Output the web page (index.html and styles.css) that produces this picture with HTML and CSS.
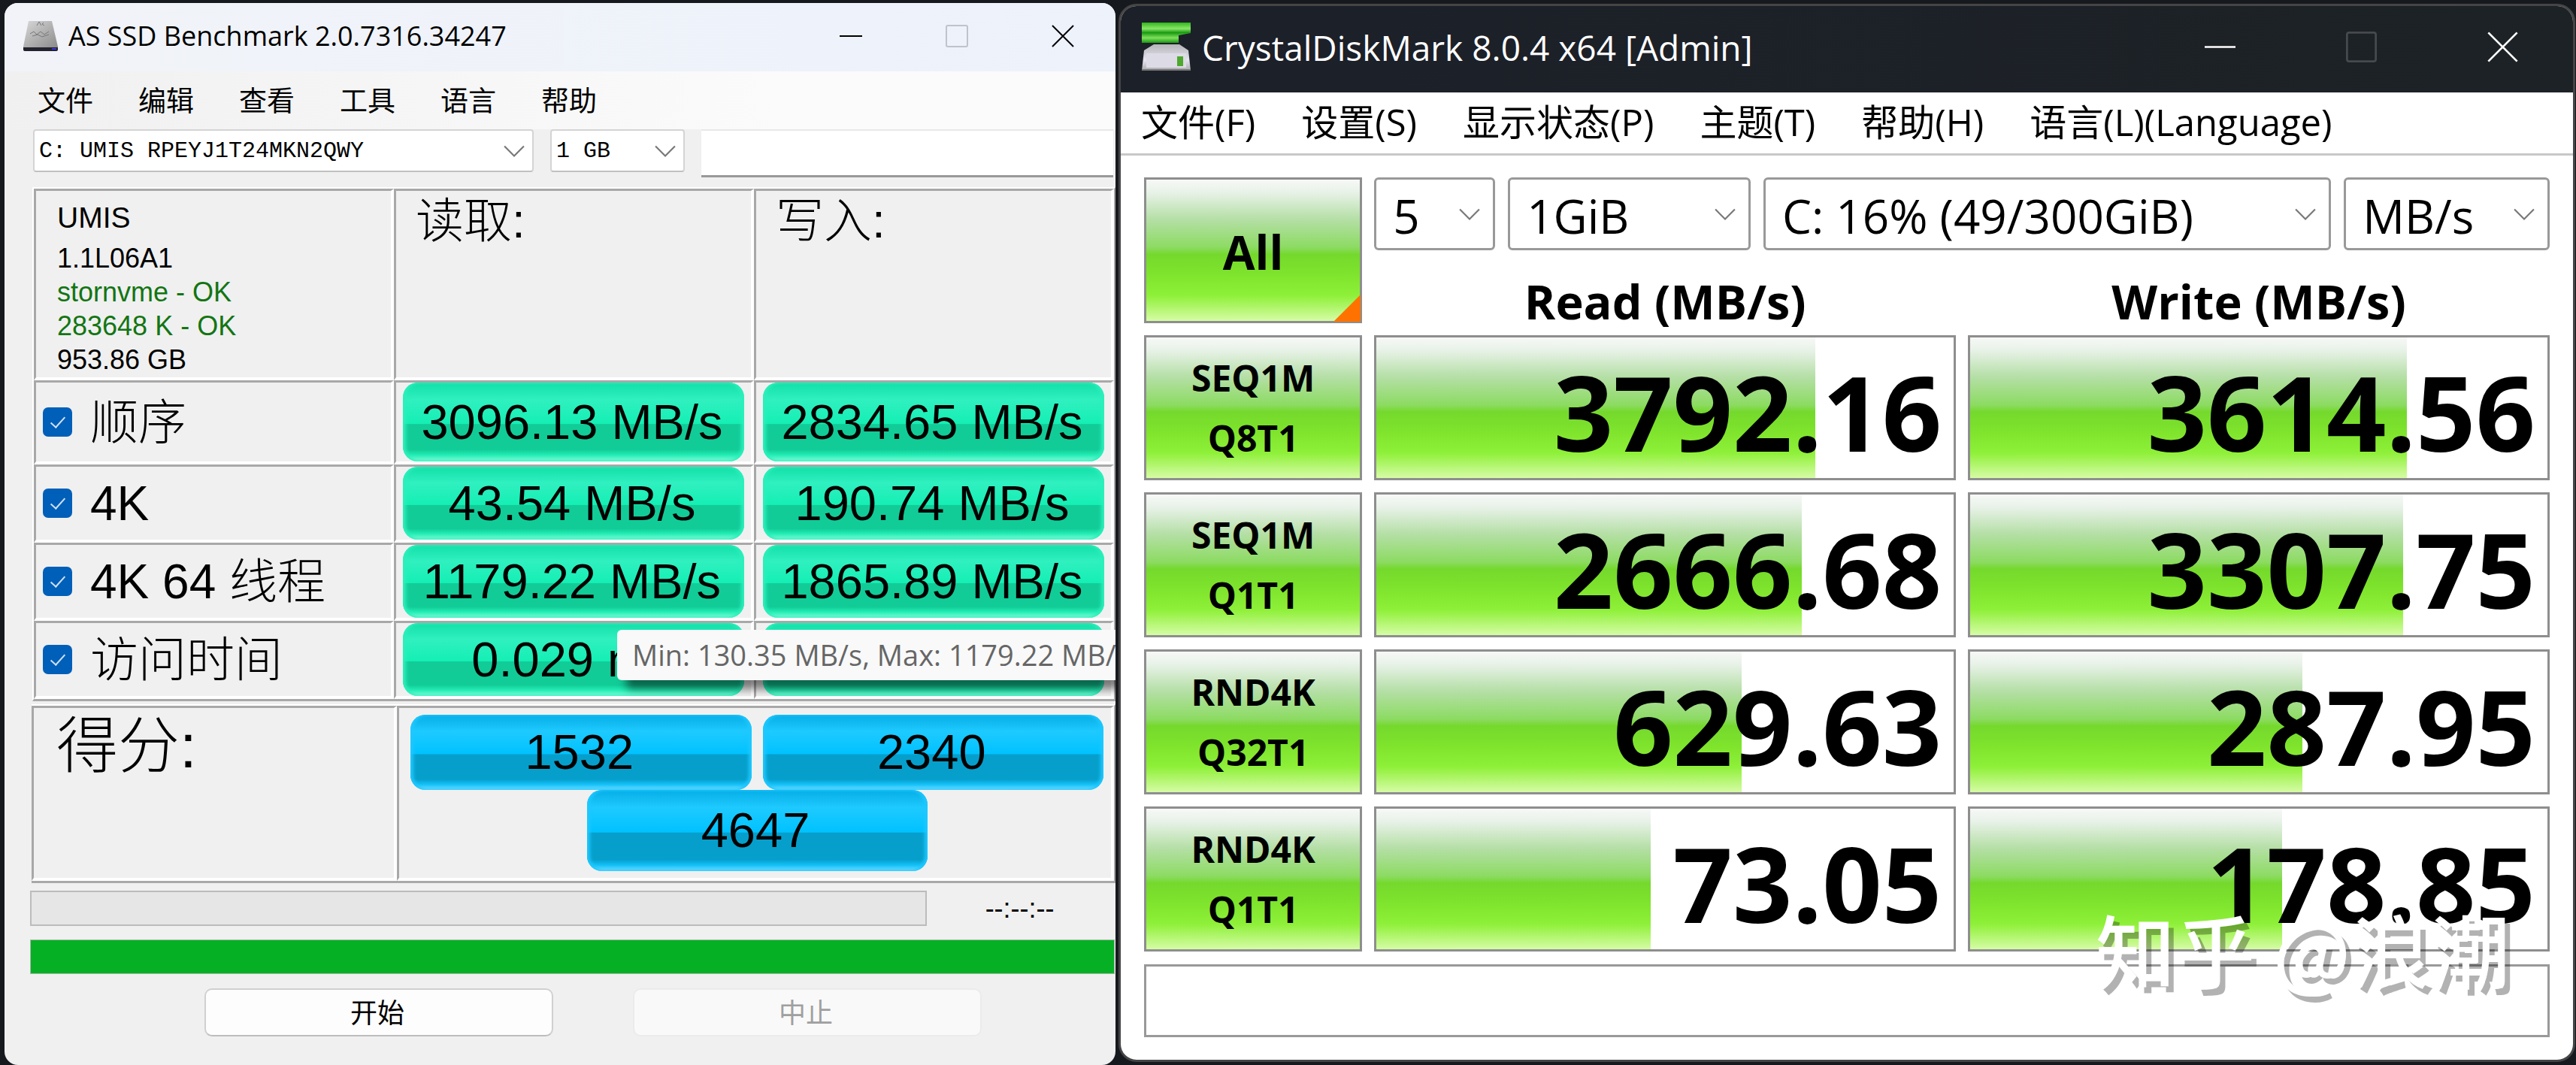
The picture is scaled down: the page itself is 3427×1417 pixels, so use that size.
FILE: index.html
```
<!DOCTYPE html>
<html lang="zh-CN">
<head>
    <meta charset="UTF-8">
    <meta name="viewport" content="width=device-width, initial-scale=1.0">
    <title>SSD Benchmarks</title>
    <link rel="stylesheet" href="styles.css">
</head>
<body>
    <main class="desktop">
        <section class="window as-window">
            <header class="titlebar">
                <svg class="app-icon" viewBox="0 0 46 40" preserveAspectRatio="none">
                    <defs>
                        <linearGradient id="drive" x1="0" y1="0" x2="1" y2="1">
                            <stop offset="0" stop-color="#d8d8d8"/>
                            <stop offset="1" stop-color="#8a8a8a"/>
                        </linearGradient>
                    </defs>
                    <path d="M7 0H38L46 34V36H0V34Z" fill="url(#drive)"/>
                    <path d="M18 6l3-5 3 5M27 2l-2 2 3 2M9 17l5-3 4 4 5-4 5 4 6-4M12 20l7-2 6 3 9-3" fill="none" stroke="#777" stroke-width="1"/>
                    <path d="M0 35H46V38Q46 40 43 40H3Q0 40 0 38Z" fill="#23232f"/>
                    <path d="M38 36h6v2h-6z" fill="#3a34d8"/>
                </svg>
                <h1>AS SSD Benchmark 2.0.7316.34247</h1>
                <button class="win-button" aria-label="Minimize"><svg viewBox="0 0 30 30"><path d="M0 15H30"/></svg></button>
                <button class="win-button" aria-label="Maximize" disabled><svg viewBox="0 0 30 30"><rect x="1" y="1" width="28" height="28" rx="2"/></svg></button>
                <button class="win-button" aria-label="Close"><svg viewBox="0 0 30 30"><path d="M1 1L29 29M29 1L1 29"/></svg></button>
            </header>

            <nav class="menubar">
                <a href="#">文件</a>
                <a href="#">编辑</a>
                <a href="#">查看</a>
                <a href="#">工具</a>
                <a href="#">语言</a>
                <a href="#">帮助</a>
            </nav>

            <div class="as-toolbar">
                <div class="select as-drive">
                    <select aria-label="Drive"><option>C: UMIS RPEYJ1T24MKN2QWY</option></select>
                    <svg viewBox="0 0 26 14"><path d="M1 1L13 13L25 1"/></svg>
                </div>
                <div class="select as-size">
                    <select aria-label="Test size"><option>1 GB</option></select>
                    <svg viewBox="0 0 26 14"><path d="M1 1L13 13L25 1"/></svg>
                </div>
                <input class="as-note" type="text" aria-label="Note">
            </div>

            <div class="as-results">
                <table class="as-table">
                    <tr class="info-row">
                        <td class="info">
                            <p class="info-name">UMIS</p>
                            <p>1.1L06A1</p>
                            <p class="ok">stornvme - OK</p>
                            <p class="ok">283648 K - OK</p>
                            <p>953.86 GB</p>
                        </td>
                        <th>读取:</th>
                        <th>写入:</th>
                    </tr>
                    <tr class="seq-row">
                        <td><label><input type="checkbox" checked>顺序</label></td>
                        <td><div class="pill">3096.13 MB/s</div></td>
                        <td><div class="pill">2834.65 MB/s</div></td>
                    </tr>
                    <tr>
                        <td><label><input type="checkbox" checked>4K</label></td>
                        <td><div class="pill">43.54 MB/s</div></td>
                        <td><div class="pill">190.74 MB/s</div></td>
                    </tr>
                    <tr>
                        <td><label><input type="checkbox" checked>4K 64 线程</label></td>
                        <td><div class="pill">1179.22 MB/s</div></td>
                        <td><div class="pill">1865.89 MB/s</div></td>
                    </tr>
                    <tr>
                        <td><label><input type="checkbox" checked>访问时间</label></td>
                        <td><div class="pill">0.029 ms</div></td>
                        <td><div class="pill"></div></td>
                    </tr>
                </table>
                <div class="tooltip">Min: 130.35 MB/s, Max: 1179.22 MB/s</div>
            </div>

            <div class="score">
                <h2>得分:</h2>
                <div class="score-values">
                    <div class="pill blue">1532</div>
                    <div class="pill blue">2340</div>
                    <div class="pill blue total">4647</div>
                </div>
            </div>

            <div class="progress-row">
                <div class="progress"></div>
                <span class="timer">--:--:--</span>
            </div>
            <div class="progress-done"></div>

            <div class="actions">
                <button>开始</button>
                <button disabled>中止</button>
            </div>
        </section>

        <section class="window cdm-window">
            <header class="titlebar">
                <svg class="app-icon" viewBox="0 0 65 65">
                    <defs>
                        <linearGradient id="arrow" x1="0" y1="0" x2="0" y2="1">
                            <stop offset="0" stop-color="#2fb51c"/>
                            <stop offset=".3" stop-color="#8be668"/>
                            <stop offset=".5" stop-color="#1a9a12"/>
                            <stop offset=".75" stop-color="#7fe05c"/>
                            <stop offset="1" stop-color="#1a9a12"/>
                        </linearGradient>
                        <linearGradient id="disk" x1="0" y1="0" x2="0" y2="1">
                            <stop offset="0" stop-color="#b4b4b8"/>
                            <stop offset=".6" stop-color="#e6e4ee"/>
                            <stop offset="1" stop-color="#a8a8ac"/>
                        </linearGradient>
                    </defs>
                    <path d="M0 0H65V14L49 17V27H0Z" fill="url(#arrow)"/>
                    <path d="M16 29H50L62 37L65 64H0L3 37Z" fill="url(#disk)"/>
                    <path d="M6 41H59V60H6Z" fill="#dddbe6"/>
                    <rect x="47" y="45" width="8" height="13" fill="#4ea82e"/>
                    <path d="M0 63H65" stroke="#777" stroke-width="2"/>
                </svg>
                <h1>CrystalDiskMark 8.0.4 x64 [Admin]</h1>
                <button class="win-button" aria-label="Minimize"><svg viewBox="0 0 30 30"><path d="M0 15H30"/></svg></button>
                <button class="win-button" aria-label="Maximize" disabled><svg viewBox="0 0 30 30"><rect x="1" y="1" width="28" height="28" rx="2"/></svg></button>
                <button class="win-button" aria-label="Close"><svg viewBox="0 0 30 30"><path d="M1 1L29 29M29 1L1 29"/></svg></button>
            </header>

            <nav class="menubar">
                <a href="#">文件(F)</a>
                <a href="#">设置(S)</a>
                <a href="#">显示状态(P)</a>
                <a href="#">主题(T)</a>
                <a href="#">帮助(H)</a>
                <a href="#">语言(L)(Language)</a>
            </nav>

            <div class="cdm-body">
                <table class="cdm-table">
                    <tbody>
                        <tr>
                            <td class="all-cell"><button class="test all">All</button></td>
                            <td class="selectors">
                                <div class="select count">
                                    <select aria-label="Test count"><option>5</option></select>
                                    <svg viewBox="0 0 26 14"><path d="M1 1L13 13L25 1"/></svg>
                                </div>
                                <div class="select size">
                                    <select aria-label="Test size"><option>1GiB</option></select>
                                    <svg viewBox="0 0 26 14"><path d="M1 1L13 13L25 1"/></svg>
                                </div>
                                <div class="select drive">
                                    <select aria-label="Drive"><option>C: 16% (49/300GiB)</option></select>
                                    <svg viewBox="0 0 26 14"><path d="M1 1L13 13L25 1"/></svg>
                                </div>
                                <div class="select unit">
                                    <select aria-label="Unit"><option>MB/s</option></select>
                                    <svg viewBox="0 0 26 14"><path d="M1 1L13 13L25 1"/></svg>
                                </div>
                            </td>
                        </tr>
                        <tr>
                            <th>Read (MB/s)</th>
                            <th>Write (MB/s)</th>
                        </tr>
                        <tr>
                            <td><button class="test">SEQ1M<br>Q8T1</button></td>
                            <td class="meter"><div class="bar" style="width: 76%"></div><span>3792.16</span></td>
                            <td class="meter"><div class="bar" style="width: 75.7%"></div><span>3614.56</span></td>
                        </tr>
                        <tr>
                            <td><button class="test">SEQ1M<br>Q1T1</button></td>
                            <td class="meter"><div class="bar" style="width: 73.7%"></div><span>2666.68</span></td>
                            <td class="meter"><div class="bar" style="width: 75%"></div><span>3307.75</span></td>
                        </tr>
                        <tr>
                            <td><button class="test">RND4K<br>Q32T1</button></td>
                            <td class="meter"><div class="bar" style="width: 63.2%"></div><span>629.63</span></td>
                            <td class="meter"><div class="bar" style="width: 57.5%"></div><span>287.95</span></td>
                        </tr>
                        <tr>
                            <td><button class="test">RND4K<br>Q1T1</button></td>
                            <td class="meter"><div class="bar" style="width: 47.5%"></div><span>73.05</span></td>
                            <td class="meter"><div class="bar" style="width: 54%"></div><span>178.85</span></td>
                        </tr>
                    </tbody>
                </table>
                <input class="cdm-note" type="text" aria-label="Comment">
            </div>
            <div class="watermark">知乎 @浪潮</div>
        </section>
    </main>
</body>
</html>
```

FILE: styles.css
```
* {
    box-sizing: border-box;
}

body {
    margin: 0;
    background-color: #16191e;
    color: #000;
    font-family: "Open Sans", "Noto Sans CJK SC", sans-serif;
}

h1, h2, p {
    margin: 0;
    font-weight: normal;
}

a {
    color: inherit;
    text-decoration: none;
}

button, select, input {
    font-family: inherit;
    color: inherit;
    border-radius: 0;
}

.desktop {
    display: grid;
    grid-template-columns: 1478fr 1938fr;
    gap: 4px;
    align-items: start;
    padding: 4px 1px 0 6px;
}

.window {
    position: relative;
    min-width: 0;
    overflow: hidden;
    border-radius: 18px;
}

.titlebar {
    display: flex;
    align-items: center;
}

.titlebar h1 {
    flex: 1;
    white-space: nowrap;
}

.app-icon {
    flex: none;
}

.win-button {
    display: flex;
    justify-content: center;
    align-items: center;
    align-self: stretch;
    padding: 0;
    border: none;
    background: none;
}

.win-button svg {
    fill: none;
    stroke: currentColor;
    stroke-width: 2;
}

.menubar {
    display: flex;
    align-items: center;
    white-space: nowrap;
}

/* drop-downs: the arrow shares the grid cell of the select */
.select {
    display: grid;
    align-items: center;
    min-width: 0;
}

.select select,
.select svg {
    grid-area: 1 / 1;
}

.select select {
    appearance: none;
    width: 100%;
    height: 100%;
    background-color: #fff;
}

.select svg {
    justify-self: end;
    width: 28px;
    height: 16px;
    margin-right: 12px;
    fill: none;
    stroke: #777;
    stroke-width: 2;
    pointer-events: none;
}

/* AS SSD */
.as-window {
    padding-bottom: 38px;
    background-color: #f0f0f0;
}

.as-window .titlebar {
    height: 91px;
    padding: 0 0 4px 25px;
    background: linear-gradient(90deg, #f1f3f8, #edf2fb);
}

.as-window .app-icon {
    width: 46px;
    height: 40px;
    margin-right: 14px;
}

.as-window h1 {
    font-size: 36px;
}

.as-window .win-button {
    width: 141px;
}

.as-window .win-button svg {
    width: 30px;
    height: 30px;
}

.as-window .win-button:disabled {
    color: #bfc3ca;
}

.as-window .menubar {
    gap: 60px;
    height: 77px;
    padding: 0 0 4px 44px;
    background: linear-gradient(90deg, #f0f0f0, #fbfbfb 70%);
    font-family: "Noto Sans CJK SC", sans-serif;
    font-size: 37px;
}

.as-toolbar {
    display: flex;
    gap: 22px;
    height: 64px;
    padding: 0 3px 0 38px;
    margin-bottom: 13px;
}

.as-toolbar .select {
    height: 57px;
}

.as-toolbar select {
    padding: 0 6px;
    border: 2px solid #d4d4d4;
    border-bottom-color: #c0c0c0;
    border-radius: 4px;
    font-family: "Liberation Mono", monospace;
    font-size: 30px;
}

.as-drive {
    flex: 668;
}

.as-size {
    flex: 179;
}

.as-note {
    flex: 546;
    min-width: 0;
    border: none;
    border-top: 2px solid #e8e8e8;
    border-bottom: 3px solid #999;
    background-color: #fff;
}

.as-results {
    position: relative;
    margin-left: 37px;
    border: 2px solid #fff;
    border-right-color: #a8a8a8;
    border-bottom: 3px solid #a8a8a8;
}

.as-table {
    width: 100%;
    table-layout: fixed;
    border-spacing: 0;
    font-family: "Liberation Sans", "Noto Sans CJK SC", sans-serif;
    font-size: 64px;
    line-height: 64px;
}

.as-table td,
.as-table th {
    height: 104px;
    padding: 0 9px;
    border: 3px solid #a8a8a8;
    border-right: 4px solid #fff;
    border-bottom: 4px solid #fff;
    text-align: left;
}

.as-table .info-row > * {
    height: 255px;
    vertical-align: top;
}

.as-table .seq-row td {
    height: 112px;
}

.as-table th {
    padding: 8px 26px;
    font-weight: 300;
}

.as-table .info {
    padding: 5px 28px 0;
    font-size: 36px;
    line-height: 45px;
}

.info .info-name {
    font-size: 39px;
    line-height: 62px;
}

.info .ok {
    color: #137513;
}

.as-table label {
    display: flex;
    align-items: center;
    gap: 24px;
    font-weight: 300;
    white-space: nowrap;
}

.as-table input {
    appearance: none;
    display: grid;
    place-items: center;
    width: 39px;
    height: 39px;
    margin: 0;
    border-radius: 7px;
    background-color: #005fb8;
}

.as-table input::after {
    content: "";
    width: 8px;
    height: 17px;
    margin-bottom: 5px;
    border: solid #cfe2f5;
    border-width: 0 2px 2px 0;
    transform: rotate(42deg);
}

.pill {
    display: flex;
    justify-content: center;
    align-items: center;
    height: 97px;
    padding-right: 4px;
    border-radius: 20px;
    background: linear-gradient(#12dfa8, #30f0c0 22%, #14efb4 52%, #12cc98 53%, #12cc98 85%, #22eeb4 92%, #8dfbdc);
    box-shadow: inset 4px 0 4px #2bf0bb, inset -4px 0 4px #2bf0bb;
    font-family: "Liberation Sans", sans-serif;
    font-size: 65px;
    line-height: 66px;
    white-space: nowrap;
}

.seq-row .pill {
    height: 105px;
}

.pill.blue {
    height: 100px;
    background: linear-gradient(#06ade6, #1ecaff 22%, #00c2ff 52%, #069fcc 53%, #069fcc 86%, #14c2fa 93%, #7ddfff);
    box-shadow: inset 4px 0 4px #1ec8ff, inset -4px 0 4px #1ec8ff;
}

.pill.blue.total {
    grid-column: 1 / -1;
    justify-self: center;
    width: calc(50% - 8px);
    height: 108px;
}

.tooltip {
    position: absolute;
    left: 54%;
    bottom: 25px;
    padding: 0 20px;
    border-radius: 6px;
    background-color: #f9f9f9;
    box-shadow: 12px 12px 12px rgba(0, 0, 0, 0.5);
    color: #666;
    font-size: 38px;
    line-height: 67px;
    white-space: nowrap;
}

.score {
    display: grid;
    grid-template-columns: 486fr 954fr;
    margin: 4px 0 10px 36px;
    border-top: 2px solid #fff;
    border-right: 2px solid #a8a8a8;
    border-bottom: 3px solid #a8a8a8;
}

.score > * {
    height: 233px;
    border: 3px solid #a8a8a8;
    border-right: 4px solid #fff;
    border-bottom: 4px solid #fff;
}

.score h2 {
    padding: 6px 30px;
    font-family: "Liberation Sans", "Noto Sans CJK SC", sans-serif;
    font-size: 82px;
    font-weight: 300;
    line-height: 90px;
}

.score-values {
    display: grid;
    grid-template-columns: 1fr 1fr;
    align-content: start;
    column-gap: 15px;
    padding: 9px 10px 0 15px;
}

.progress-row {
    display: flex;
    align-items: center;
    padding-left: 34px;
}

.progress {
    flex: 1195;
    height: 47px;
    border: 2px solid #bcbcbc;
    background-color: #e6e6e6;
}

.timer {
    flex: 248;
    padding-right: 4px;
    font-family: "Liberation Sans", sans-serif;
    font-size: 36px;
    line-height: 40px;
    text-align: center;
}

.progress-done {
    height: 46px;
    margin: 18px 1px 19px 34px;
    border: 1px solid #a9b8a9;
    background-color: #06b025;
}

.actions {
    display: flex;
    justify-content: center;
    gap: 106px;
    padding-left: 100px;
    padding-right: 12px;
}

.actions button {
    width: 464px;
    height: 64px;
    padding: 0 4px 4px 0;
    border: 2px solid #d0d0d0;
    border-bottom-color: #bdbdbd;
    border-radius: 10px;
    background-color: #fdfdfd;
    font-family: "Noto Sans CJK SC", sans-serif;
    font-size: 36px;
}

.actions button:disabled {
    border-color: #ebebeb;
    background-color: #f9f9f9;
    color: #a0a0a0;
}

/* CrystalDiskMark */
.cdm-window {
    margin-top: 1px;
    border: 3px solid #454545;
    border-radius: 24px;
    background-color: #fff;
}

.cdm-window .titlebar {
    height: 115px;
    padding: 0 0 6px 28px;
    background: linear-gradient(90deg, #1c2029, #1d2226);
    color: #fff;
}

.cdm-window .app-icon {
    width: 65px;
    height: 65px;
    margin-right: 15px;
}

.cdm-window h1 {
    font-size: 46px;
}

.cdm-window .win-button {
    width: 188px;
}

.cdm-window .win-button svg {
    width: 41px;
    height: 41px;
}

.cdm-window .win-button:disabled {
    color: #464a4e;
}

.cdm-window .menubar {
    gap: 61px;
    height: 84px;
    padding: 0 0 8px 27px;
    border-bottom: 3px solid #c8c8c8;
    font-size: 49px;
}

.cdm-body {
    padding: 29px 31px 30px;
}

.cdm-table {
    display: grid;
    grid-template-columns: 290fr 773fr 773fr;
    grid-template-rows: 97px 81px;
    grid-auto-rows: 193px;
    gap: 16px;
    margin-bottom: 17px;
}

.cdm-table tbody,
.cdm-table tr {
    display: contents;
}

.cdm-table td,
.cdm-table th {
    padding: 0;
}

.cdm-table .all-cell {
    position: relative;
    grid-row: span 2;
}

/* orange corner of the All button */
.all-cell::after {
    content: "";
    position: absolute;
    right: 2px;
    bottom: 2px;
    border-left: 36px solid transparent;
    border-bottom: 36px solid #ff7200;
}

.cdm-table .selectors {
    display: flex;
    grid-column: span 2;
    gap: 17px;
}

.selectors select {
    padding: 4px 22px 0;
    border: 3px solid #999;
    border-radius: 6px;
    font-size: 62px;
}

.selectors .count {
    flex: 161;
}

.selectors .size {
    flex: 323;
}

.selectors .drive {
    flex: 756;
}

.selectors .unit {
    flex: 274;
}

.selectors svg {
    margin-right: 20px;
}

.cdm-table th {
    padding-top: 14px;
    font-size: 63px;
    font-weight: 700;
    line-height: 76px;
}

.test,
.bar {
    background: linear-gradient(#f7f8f7, #e8f2e8 9%, #b5dfa6 28%, #8cdb62 48%, #74d92c 53%, #7ee32c 66%, #8ef038 82%, #d6fca6);
}

.test {
    width: 100%;
    height: 100%;
    padding: 0;
    border: 3px solid #8e8e8e;
    font-size: 48px;
    font-weight: 700;
    line-height: 80px;
}

.test.all {
    padding-top: 4px;
    font-size: 62px;
}

.meter {
    display: grid;
    align-items: center;
    border: 3px solid #8e8e8e;
}

.meter > * {
    grid-area: 1 / 1;
}

.bar {
    height: 100%;
}

.meter span {
    padding: 8px 16px 0 0;
    font-size: 139px;
    font-weight: 700;
    line-height: 140px;
    text-align: right;
}

.cdm-note {
    display: block;
    width: 100%;
    height: 97px;
    border: 3px solid #999;
    background-color: #fff;
}

.watermark {
    position: absolute;
    right: 84px;
    bottom: 89px;
    color: #fff;
    font-family: "Noto Sans CJK SC", sans-serif;
    font-size: 106px;
    font-weight: 500;
    line-height: 120px;
    text-shadow: 7px 8px 0 rgba(0, 0, 0, 0.3);
    white-space: nowrap;
}
```
